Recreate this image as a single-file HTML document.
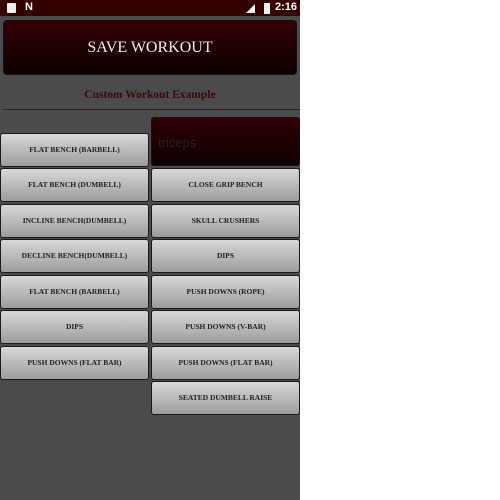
<!DOCTYPE html>
<html><head><style>
body{margin:0;width:500px;height:500px;background:#fff;position:relative;overflow:hidden;font-family:"Liberation Serif",serif}
#ph{position:absolute;left:0;top:0;width:300px;height:500px;background:#4b4b4b}
#sb{position:absolute;left:0;top:0;width:300px;height:16px;background:#350000;color:#fff;font:bold 11px "Liberation Sans",sans-serif}
.save{position:absolute;left:3px;top:20px;width:292px;height:53px;border:1px solid #111;border-radius:4px;background:linear-gradient(#330006,#0e0000);color:#eee;font-size:16px;text-align:center;line-height:53px}
.title{position:absolute;left:0;width:300px;top:89px;text-align:center;color:#3b0a0a;font-size:11.5px;font-weight:bold}
.line{position:absolute;left:3px;width:297px;top:109px;height:1px;background:#7a0000}
.tri{position:absolute;left:151px;top:117px;width:149px;height:49px;border:1px solid #111;border-radius:3px;background:linear-gradient(#300006,#0e0000);color:#222;font:13px "Liberation Sans",sans-serif;padding:0 6px;box-sizing:border-box;line-height:49px}
.b{position:absolute;width:149px;height:34px;border:1px solid #1a1a1a;border-radius:3px;box-sizing:border-box;background:linear-gradient(#d8d8d8,#9c9c9c);color:#222;font-size:7.5px;text-align:center;line-height:32px;font-weight:bold}
.l{left:0}.r{left:151px}
</style></head><body>
<div id="ph">
<div id="sb"><span style="position:absolute;left:7px;top:3px;width:9px;height:10px;background:#eee;border-radius:1px"></span><span style="position:absolute;left:25px;top:1px">N</span><span style="position:absolute;left:264px;top:3px;width:6px;height:11px;background:#eee"></span><span style="position:absolute;left:275px;top:1px">2:16</span><span style="position:absolute;left:246px;top:4px;width:0;height:0;border-left:9px solid transparent;border-bottom:9px solid #eee"></span></div>
<div class="save">SAVE WORKOUT</div>
<div class="title">Custom Workout Example</div>
<div class="line"></div>
<div class="tri">triceps</div>
<div class="b l" style="top:133px">FLAT BENCH (BARBELL)</div>
<div class="b l" style="top:168px">FLAT BENCH (DUMBELL)</div>
<div class="b r" style="top:168px">CLOSE GRIP BENCH</div>
<div class="b l" style="top:204px">INCLINE BENCH(DUMBELL)</div>
<div class="b r" style="top:204px">SKULL CRUSHERS</div>
<div class="b l" style="top:239px">DECLINE BENCH(DUMBELL)</div>
<div class="b r" style="top:239px">DIPS</div>
<div class="b l" style="top:275px">FLAT BENCH (BARBELL)</div>
<div class="b r" style="top:275px">PUSH DOWNS (ROPE)</div>
<div class="b l" style="top:310px">DIPS</div>
<div class="b r" style="top:310px">PUSH DOWNS (V-BAR)</div>
<div class="b l" style="top:346px">PUSH DOWNS (FLAT BAR)</div>
<div class="b r" style="top:346px">PUSH DOWNS (FLAT BAR)</div>
<div class="b r" style="top:381px">SEATED DUMBELL RAISE</div>
</div>
</body></html>
